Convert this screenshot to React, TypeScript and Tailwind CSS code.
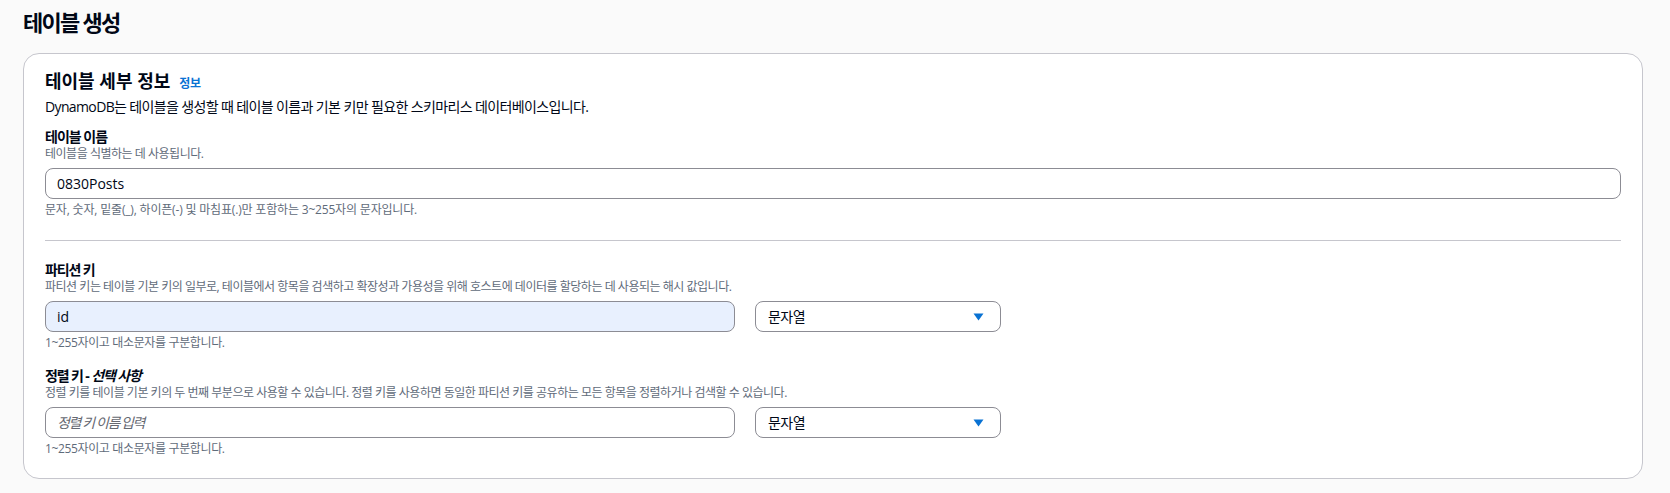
import React from "react";

const FONT = "font-['Open_Sans','Noto_Sans_CJK_KR',sans-serif]";

function SelectBox() {
    return (
        <div className="flex h-[31px] w-[246px] shrink-0 items-center justify-between rounded-[8px] border border-[#8c8c94] bg-white pl-[12px] pr-[16px]">
            <span className="text-[14px] leading-[20px] tracking-[-0.04em] text-[#000716]">문자열</span>
            <svg width="11" height="8" viewBox="0 0 11 8" aria-hidden="true">
                <path d="M0.5 0.5 H10.5 L5.5 7.5 Z" fill="#0972d3" />
            </svg>
        </div>
    );
}

function KeyField({
    label,
    optional,
    help,
    value,
    placeholder,
    filled,
}: {
    label: string;
    optional?: string;
    help: string;
    value?: string;
    placeholder?: string;
    filled?: boolean;
}) {
    return (
        <div className="flex flex-col">
            <p className="text-[14px] font-bold leading-[18px] tracking-[-0.08em] text-[#000716]">
                {label}
                {optional && <i className="italic"> {optional}</i>}
            </p>
            <p className="text-[12px] leading-[16px] tracking-[-0.04em] text-[#5f6b7a]">{help}</p>
            <div className="mt-[6px] flex items-center gap-[20px]">
                <div
                    className={
                        filled
                            ? "flex h-[31px] w-[690px] shrink-0 items-center rounded-[8px] border border-[#8c8c94] bg-[#e8f0fe] pl-[11px]"
                            : "flex h-[31px] w-[690px] shrink-0 items-center rounded-[8px] border border-[#8c8c94] bg-white pl-[11px]"
                    }
                >
                    {value ? (
                        <span className="text-[14px] leading-[20px] text-[#000716]">{value}</span>
                    ) : (
                        <span className="text-[14px] italic leading-[20px] tracking-[-0.1em] text-[#656871]">
                            {placeholder}
                        </span>
                    )}
                </div>
                <SelectBox />
            </div>
            <p className="mt-[3px] text-[12px] leading-[16px] tracking-[-0.03em] text-[#5f6b7a]">
                1~255자이고 대소문자를 구분합니다.
            </p>
        </div>
    );
}

export default function App() {
    return (
        <div className={`${FONT} min-h-[493px] w-full bg-[#fafafa] pb-[12px] pl-[23px] pr-[27px] pt-[6px]`}>
            <h1 className="text-[22px] font-bold leading-[32px] tracking-[-0.08em] text-[#000716]">테이블 생성</h1>

            <div className="mt-[15px] rounded-[16px] border border-[#c6c6cd] bg-white px-[21px] pb-[21px] pt-[15px]">
                <div className="flex items-baseline gap-[9px]">
                    <h2 className="text-[18px] font-bold leading-[24px] text-[#000716]">테이블 세부 정보</h2>
                    <a className="text-[12px] font-bold leading-[16px] tracking-[-0.03em] text-[#0972d3]">정보</a>
                </div>
                <p className="mt-[4px] text-[14px] leading-[20px] tracking-[-0.045em] text-[#000716]">
                    DynamoDB는 테이블을 생성할 때 테이블 이름과 기본 키만 필요한 스키마리스 데이터베이스입니다.
                </p>

                <div className="mt-[11px] flex flex-col">
                    <p className="text-[14px] font-bold leading-[18px] tracking-[-0.07em] text-[#000716]">테이블 이름</p>
                    <p className="text-[12px] leading-[16px] tracking-[-0.04em] text-[#5f6b7a]">
                        테이블을 식별하는 데 사용됩니다.
                    </p>
                    <div className="mt-[6px] flex h-[31px] items-center rounded-[8px] border border-[#8c8c94] bg-white pl-[11px]">
                        <span className="text-[14px] leading-[20px] text-[#000716]">0830Posts</span>
                    </div>
                    <p className="mt-[3px] text-[12px] leading-[16px] tracking-[-0.015em] text-[#5f6b7a]">
                        문자, 숫자, 밑줄(_), 하이픈(-) 및 마침표(.)만 포함하는 3~255자의 문자입니다.
                    </p>
                </div>

                <div className="mt-[22px] border-t border-[#c6c6cd]" />

                <div className="mt-[20px]">
                    <KeyField
                        label="파티션 키"
                        help="파티션 키는 테이블 기본 키의 일부로, 테이블에서 항목을 검색하고 확장성과 가용성을 위해 호스트에 데이터를 할당하는 데 사용되는 해시 값입니다."
                        value="id"
                        filled
                    />
                </div>

                <div className="mt-[16px]">
                    <KeyField
                        label="정렬 키 -"
                        optional="선택 사항"
                        help="정렬 키를 테이블 기본 키의 두 번째 부분으로 사용할 수 있습니다. 정렬 키를 사용하면 동일한 파티션 키를 공유하는 모든 항목을 정렬하거나 검색할 수 있습니다."
                        placeholder="정렬 키 이름 입력"
                    />
                </div>
            </div>
        </div>
    );
}
